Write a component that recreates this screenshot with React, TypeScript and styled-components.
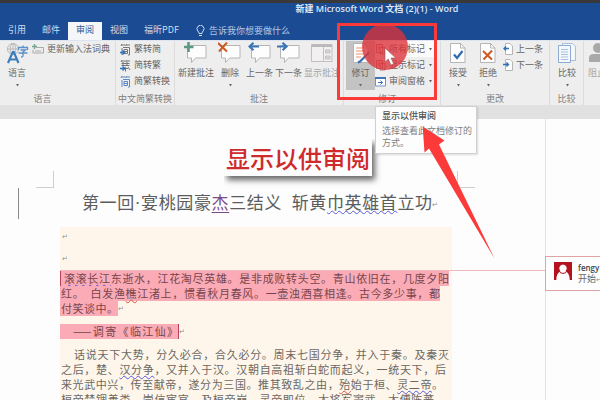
import React from "react";
import styled, { createGlobalStyle } from "styled-components";

const GlobalStyle = createGlobalStyle`
  * { box-sizing: border-box; }
  body { margin: 0; overflow: hidden; }
  button, input, select { font: inherit; color: inherit; border: 0; background: none; padding: 0; margin: 0; }
  svg { display: block; flex: none; }
`;

const Window = styled.div`
  position: relative;
  display: flex;
  flex-direction: column;
  height: 100vh;
  overflow: hidden;
  background: #fdfdfd;
  color: #666;
  font: 9px/12px "Noto Sans CJK SC", sans-serif;
`;

const TitleBar = styled.header`
  flex: none;
  border-top: 3px solid #393939;
  background: #1a4b93;
  color: #dfe8f5;
  padding-left: 154px;
  text-align: center;
  font: 600 9px/12px "Open Sans", "Noto Sans CJK SC", sans-serif;
  height: 22px;
`;

const Tabs = styled.nav`
  flex: none;
  display: flex;
  height: 18px;
  background: #1a4b93;
  color: #d3dff0;
`;

const Tab = styled.button<{ $active?: boolean }>`
  padding: 0 8px 2px;
  background: ${(p) => (p.$active ? "#f4f6f8" : "transparent")};
  color: ${(p) => (p.$active ? "#2b579a" : "inherit")};
`;

const TellMe = styled.label`
  display: flex;
  align-items: center;
  gap: 4px;
  padding-left: 9px;
  color: #b4c8e6;
  input { width: 100px; outline: none; }
  input::placeholder { color: #b4c8e6; opacity: 1; }
`;

const Ribbon = styled.div`
  flex: none;
  display: flex;
  height: 65px;
  background: #eeeeee;
  border-top: 1px solid #dbe4f0;
`;

const Group = styled.section<{ $width: number }>`
  flex: none;
  width: ${(p) => p.$width}px;
  display: flex;
  flex-direction: column;
  border-right: 1px solid #dcdcdc;
`;

const GroupBody = styled.div<{ $pad: number }>`
  flex: 1;
  display: flex;
  align-items: flex-start;
  padding-left: ${(p) => p.$pad}px;
`;

const GroupLabel = styled.footer<{ $shift?: number }>`
  text-align: center;
  line-height: 12px;
  padding-right: ${(p) => p.$shift || 0}px;
  color: #808080;
`;

const BigButton = styled.button<{ $width: number; $pressed?: boolean; $dim?: boolean }>`
  flex: none;
  width: ${(p) => p.$width}px;
  height: 49px;
  display: flex;
  flex-direction: column;
  align-items: center;
  white-space: nowrap;
  padding-top: 1px;
  background: ${(p) => (p.$pressed ? "#c3c3c3" : "transparent")};
  color: ${(p) => (p.$dim ? "#a5a5a5" : "inherit")};
  span { margin-top: 3px; }
`;

const Stack = styled.div`
  display: flex;
  flex-direction: column;
  align-items: flex-start;
`;

const SmallButton = styled.button`
  display: flex;
  align-items: center;
  gap: 3px;
  height: 16px;
  white-space: nowrap;
`;

const MarkupField = styled.label`
  display: flex;
  align-items: center;
  gap: 3px;
  height: 16px;
`;

const SelectBox = styled.span`
  display: flex;
  align-items: center;
  height: 16px;
  background: #fbfbfb;
  padding: 0 2px 0 0;
  select { appearance: none; width: 39px; outline: none; line-height: 12px; }
`;

const Workspace = styled.main`
  flex: 1;
  min-height: 0;
  display: flex;
  border-top: 14px solid #e1e1e1;
`;

const Page = styled.article`
  flex: 1;
  min-width: 0;
  padding-top: 52px;
`;

const Margins = styled.div`
  display: flex;
  justify-content: space-between;
  width: 439px;
  margin-left: 36px;
`;

const Corner = styled.i<{ $side: "left" | "right" }>`
  width: 18px;
  height: 17px;
  border-bottom: 1px solid #cfcfcf;
  border-${(p) => (p.$side === "left" ? "right" : "left")}: 1px solid #cfcfcf;
`;

const Heading = styled.div`
  display: flex;
  align-items: center;
  height: 31px;
  margin-left: 18px;
  border-left: 1px solid #8a8a8a;
  padding-left: 63px;
  h1 {
    margin: 0;
    width: 350px;
    font: 17px/24px "Liberation Serif", "Noto Sans CJK SC", serif;
    color: #5c5c5c;
    white-space: nowrap;
    text-align: justify;
    text-align-last: justify;
  }
  u { color: #7a4a8c; text-decoration-thickness: 1px; text-underline-offset: 3px; }
`;

const Manuscript = styled.div`
  width: 392px;
  margin: 8px 0 0 60px;
  padding-bottom: 40px;
  background: #fef6ea;
  font-size: 11px;
  line-height: 15px;
  color: #6c6863;
`;

const Blank = styled.p`
  margin: 0;
  padding-left: 2px;
  height: 22px;
  line-height: 14px;
`;

const Para = styled.p`
  margin: 0 0 8px;
`;

const Row = styled.span`
  display: flex;
  align-items: flex-start;
  height: 15px;
`;

const Line = styled.span<{ $width: number; $indent?: number; $marked?: boolean }>`
  flex: none;
  width: ${(p) => p.$width}px;
  height: 15px;
  padding-left: ${(p) => p.$indent || 1}px;
  background: ${(p) => (p.$marked ? "#fbabb6" : "transparent")};
  color: ${(p) => (p.$marked ? "#76454d" : "inherit")};
  white-space: nowrap;
  text-align: justify;
  text-align-last: justify;
`;

const Bracket = styled(Line)<{ $edge: "left" | "right" }>`
  border-${(p) => p.$edge}: 1px solid #b8425a;
`;

const Wavy = styled.span<{ $color: string }>`
  text-decoration: underline wavy ${(p) => p.$color} 1px;
  text-underline-offset: 1px;
  text-decoration-skip-ink: none;
`;

const Mark = styled.span`
  font-size: 7px;
  color: #8f8f8f;
`;

const Comments = styled.aside`
  flex: none;
  width: 55px;
  border-left: 1px solid #e6e0e0;
  padding-top: 137px;
`;

const Comment = styled.div`
  display: flex;
  gap: 6px;
  height: 35px;
  padding: 5px 0 0 8px;
  border: solid #dfa3a6;
  border-width: 1px 0 1px 1px;
  margin-left: -1px;
  white-space: nowrap;
`;

const CommentText = styled.div`
  display: flex;
  flex-direction: column;
  b { font: 600 8px/11px "Open Sans", sans-serif; color: #444; }
  span { line-height: 12px; }
`;

const Connector = styled.i`
  position: absolute;
  top: 270px;
  left: 60px;
  right: 55px;
  height: 1px;
  background: #eeb9bb;
`;

const Tooltip = styled.div`
  position: absolute;
  left: 375px;
  top: 106px;
  width: 102px;
  padding: 3px 4px 4px 6px;
  background: #fdfdfd;
  border: 1px solid #d0d0d0;
  box-shadow: 1px 1px 2px #0002;
  color: #808080;
  line-height: 12px;
  strong { display: block; margin-bottom: 3px; font-weight: 500; color: #505050; }
`;

const Callout = styled.div`
  position: absolute;
  left: 224px;
  top: 139px;
  padding: 0 2px;
  background: #fdfdfd;
  box-shadow: 3px 4px 6px #0009;
  clip-path: inset(0 -14px -14px 0);
  color: #cf2a2c;
  font: 500 24px/37px "Noto Sans CJK SC", sans-serif;
  white-space: nowrap;
`;

const Frame = styled.div`
  position: absolute;
  left: 337px;
  top: 23px;
  width: 100px;
  height: 77px;
  border: 3px solid #fc3a3a;
`;

const Halo = styled.div`
  position: absolute;
  left: 362px;
  top: 24px;
  width: 46px;
  height: 46px;
  border-radius: 50%;
  background: #dc3238c8;
`;

const Pointer = styled.svg`
  position: absolute;
  left: 384px;
  top: 47px;
`;

const Arrow = styled.svg`
  position: absolute;
  left: 420px;
  top: 124px;
`;

const Caret = () => (
  <svg width="5" height="12" viewBox="0 0 5 12"><path d="M1 5h3L2.500 7.500z" fill="#666" /></svg>
);

const Bubble = ({ children }: { children: React.ReactNode }) => (
  <svg width="24" height="22" viewBox="0 0 24 22">
    <path d="M3.500 3.500h18.500v12.500h-10.500l-4 4.500v-4.500h-4z" fill="#fdfdfd" stroke="#b5b5b5" />
    {children}
  </svg>
);

const Sheet = ({ children }: { children: React.ReactNode }) => (
  <svg width="18" height="22" viewBox="0 0 18 22">
    <path d="M1.500 1.500h10l4.500 4.500v14.500h-14.500z" fill="#fdfdfd" stroke="#b5b5b5" />
    <path d="M11.500 1.500v4.500h4.500" fill="none" stroke="#b5b5b5" />
    {children}
  </svg>
);

const LanguageIcon = () => (
  <svg width="24" height="22" viewBox="0 0 24 22">
    <g fill="none" stroke="#b9b9b9"><circle cx="8" cy="7" r="5.500" /><path d="M2.500 7h11M8 1.500v11" /><ellipse cx="8" cy="7" rx="2.800" ry="5.500" /></g>
    <path d="M3 21L7.800 10h1L13.500 21M4.700 17.500h7.200" fill="none" stroke="#3c7dbd" strokeWidth="2.200" />
    <path d="M13.500 8V5.500h9V8M18 3.500v2M15.500 8h5l-2.500 2v4q0 1-2 1M13.500 11h9" fill="none" stroke="#5b8fc9" strokeWidth="1.300" />
  </svg>
);

const ImeIcon = () => (
  <svg width="12" height="10" viewBox="0 0 12 10">
    <path d="M4 3.500h7.500v5.500h-10.500V5.500M3 7h6" fill="none" stroke="#ababab" />
    <path d="M2.500 0v5M0 2.500h5" stroke="#76a58e" strokeWidth="1.400" />
  </svg>
);

const ConvertIcon = ({ kind }: { kind: "jian" | "fan" | "both" }) => (
  <svg width="11" height="13" viewBox="0 0 11 13">
    <g fill="none" stroke={kind === "both" ? "#5b8ac2" : "#777"}>
      <path d="M2 1L1 3M1.500 2h3.500M6.500 1L5.500 3M6 2h4" />
      {kind === "fan"
        ? <path d="M1.500 4.500h8M1.500 6.500h8M3 3v4M7 3v4M6 8l-2 1.500h4M5.500 9.500v3M8 8l2 3" />
        : <path d="M2 5v7M3 4.500h6.500v7.500h-1.500M4 6.500h3.500v4h-3.500zM4 8.500h3.500" />}
    </g>
    {kind !== "both" && <path d="M0 9.500h4.500M2.500 7.500l2.200 2-2.200 2" fill="none" stroke="#2f72b5" strokeWidth="1.400" />}
  </svg>
);

const ShowCommentsIcon = () => (
  <svg width="24" height="22" viewBox="0 0 24 22">
    <path d="M1.500 2.500h20.500v17h-20.500z" fill="#f3f0f2" stroke="#c4bfc2" />
    <path d="M1.500 2.500h20.500v2.500h-20.500z" fill="#bcb7ba" />
    <path d="M13.500 5v14.500" stroke="#c4bfc2" />
    <path d="M15.500 8h4.500v3h-4.500zM15.500 14h4.500v3h-4.500z" fill="#ddd5da" stroke="#c4bfc2" />
  </svg>
);

const TrackIcon = () => (
  <Sheet>
    <path d="M4 6h6M4 9h9M4 12h8M4 15h5" stroke="#e9936f" />
    <path d="M17 10.500L8 19.500l-2 1" stroke="#3c6fae" strokeWidth="2.200" fill="none" />
  </Sheet>
);

const MarkupIcon = () => (
  <svg width="11" height="12" viewBox="0 0 11 12">
    <path d="M1.500 1.500h6v8h-6zM5 4.500h5v6.500h-5z" fill="#f7e6e6" stroke="#a5787c" />
    <path d="M3 4h3M3 6h2" stroke="#c56a6a" />
  </svg>
);

const PaneIcon = () => (
  <svg width="11" height="11" viewBox="0 0 11 11">
    <path d="M.5 1.500h10v8.500h-10z" fill="#fff" stroke="#6f93bd" />
    <path d="M0 1h11v2H0z" fill="#3f76b5" />
    <path d="M3 6.500h4.500M5.500 4.500l2 2-2 2" fill="none" stroke="#2f72b5" />
  </svg>
);

const StepIcon = ({ back }: { back?: boolean }) => (
  <svg width="10" height="12" viewBox="0 0 10 12">
    <path d="M2.500 .5h4.500l2.500 2.500v8.500h-7z" fill="#fff" stroke="#b5b5b5" />
    <path d={back ? "M6 5.500H1M3 3.500l-2 2 2 2" : "M0 5.500h5.500M3.500 3.500l2 2-2 2"} fill="none" stroke="#2f72b5" strokeWidth="1.400" />
  </svg>
);

const CompareIcon = () => (
  <svg width="20" height="22" viewBox="0 0 20 22">
    <path d="M5.500 1.500h10l3 3v14h-13z" fill="#f4f7fb" stroke="#a9bdd8" />
    <path d="M1.500 3.500h12v17h-12z" fill="#f4f8fd" stroke="#8eabd1" />
    <path d="M4 7.500h7M4 10h7M4 12.500h7M4 15h7M4 17.500h7" stroke="#a8c1e2" />
  </svg>
);

const BlockIcon = () => (
  <svg width="22" height="22" viewBox="0 0 22 22">
    <circle cx="12" cy="6" r="5" fill="#a9a9a9" />
    <path d="M3 20v-4q0-4 5-4h8q5 0 5 4v4z" fill="#a9a9a9" />
  </svg>
);

const Avatar = () => (
  <svg width="18" height="18" viewBox="0 0 18 18">
    <path d="M0 0h18v18H0z" fill="#b5121f" />
    <path d="M9 2.500a3.800 4 0 0 1 2.500 7q4 1 4.200 8.500H2.300q.2-7.500 4.200-8.500a3.800 4 0 0 1 2.500-7z" fill="#fdfdfd" />
    <path d="M6 10.500q3 2 6 0" fill="none" stroke="#b5121f" />
  </svg>
);

const blue = "#5a5ad8";
const red = "#dd4a3c";

export default function App() {
  return (
    <Window>
      <GlobalStyle />
      <TitleBar>新建 Microsoft Word 文档 (2)(1) - Word</TitleBar>
      <Tabs>
        <Tab>引用</Tab>
        <Tab>邮件</Tab>
        <Tab $active>审阅</Tab>
        <Tab>视图</Tab>
        <Tab>福昕PDF</Tab>
        <TellMe>
          <svg width="9" height="12" viewBox="0 0 9 12" aria-hidden="true">
            <path d="M3 8.500Q3 7 1.800 6a3.500 3.500 0 1 1 5.400 0Q6 7 6 8.500zM3 10.500h3" fill="none" stroke="#cfdcf0" />
          </svg>
          <input aria-label="告诉我你想要做什么" placeholder="告诉我你想要做什么" />
        </TellMe>
      </Tabs>

      <Ribbon>
        <Group $width={116}>
          <GroupBody $pad={2}>
            <BigButton $width={30}><LanguageIcon /><span>语言</span><Caret /></BigButton>
            <Stack>
              <SmallButton><ImeIcon />更新输入法词典</SmallButton>
            </Stack>
          </GroupBody>
          <GroupLabel $shift={30}>语言</GroupLabel>
        </Group>
        <Group $width={59}>
          <GroupBody $pad={4}>
            <Stack>
              <SmallButton><ConvertIcon kind="jian" />繁转简</SmallButton>
              <SmallButton><ConvertIcon kind="fan" />简转繁</SmallButton>
              <SmallButton><ConvertIcon kind="both" />简繁转换</SmallButton>
            </Stack>
          </GroupBody>
          <GroupLabel>中文简繁转换</GroupLabel>
        </Group>
        <Group $width={169}>
          <GroupBody $pad={2}>
            <BigButton $width={38}>
              <Bubble><path d="M4.500 0v10M0 5h9.500" stroke="#5b9a80" strokeWidth="2.600" /></Bubble>
              <span>新建批注</span>
            </BigButton>
            <BigButton $width={30}>
              <Bubble><path d="M0 1l9 8.500M9 .5L1 9.500" stroke="#cd5a24" strokeWidth="2" /></Bubble>
              <span>删除</span><Caret />
            </BigButton>
            <BigButton $width={29}>
              <Bubble><path d="M11 4.500H1.500M5.500 .8l-4 3.700 4 3.700" fill="none" stroke="#3a76b8" strokeWidth="2.200" /></Bubble>
              <span>上一条</span>
            </BigButton>
            <BigButton $width={29}>
              <Bubble><path d="M0 4.500h9.500M5.500 .8l4 3.700-4 3.700" fill="none" stroke="#3a76b8" strokeWidth="2.200" /></Bubble>
              <span>下一条</span>
            </BigButton>
            <BigButton $width={38} $dim><ShowCommentsIcon /><span>显示批注</span></BigButton>
          </GroupBody>
          <GroupLabel>批注</GroupLabel>
        </Group>
        <Group $width={97}>
          <GroupBody $pad={2}>
            <BigButton $width={29} $pressed><TrackIcon /><span>修订</span><Caret /></BigButton>
            <Stack>
              <MarkupField>
                <MarkupIcon />
                <SelectBox>
                  <select aria-label="标记显示方式" defaultValue="all"><option value="all">所有标记</option></select>
                  <Caret />
                </SelectBox>
              </MarkupField>
              <SmallButton><MarkupIcon />显示标记<Caret /></SmallButton>
              <SmallButton><PaneIcon />审阅窗格<Caret /></SmallButton>
            </Stack>
          </GroupBody>
          <GroupLabel $shift={10}>修订</GroupLabel>
        </Group>
        <Group $width={109}>
          <GroupBody $pad={2}>
            <BigButton $width={30}>
              <Sheet><path d="M5 12.500l3 3.500 5.500-7" fill="none" stroke="#2f6cb0" strokeWidth="2.200" /></Sheet>
              <span>接受</span><Caret />
            </BigButton>
            <BigButton $width={30}>
              <Sheet><path d="M4 9l9 8.500M13 8.500L4.500 17.500" stroke="#cd5a24" strokeWidth="2" /></Sheet>
              <span>拒绝</span><Caret />
            </BigButton>
            <Stack>
              <SmallButton><StepIcon back />上一条</SmallButton>
              <SmallButton><StepIcon />下一条</SmallButton>
            </Stack>
          </GroupBody>
          <GroupLabel>更改</GroupLabel>
        </Group>
        <Group $width={34}>
          <GroupBody $pad={2}>
            <BigButton $width={30}><CompareIcon /><span>比较</span><Caret /></BigButton>
          </GroupBody>
          <GroupLabel>比较</GroupLabel>
        </Group>
        <Group $width={60}>
          <GroupBody $pad={0}>
            <BigButton $width={26} $dim><BlockIcon /><span>阻止</span></BigButton>
          </GroupBody>
        </Group>
      </Ribbon>

      <Workspace>
        <Page>
          <Margins><Corner $side="left" /><Corner $side="right" /></Margins>
          <Heading>
            <h1>第一回·宴桃园豪<u>杰</u>三结义&nbsp; 斩黄<Wavy $color={blue}>巾英雄首</Wavy>立功</h1>
            <Mark>↵</Mark>
          </Heading>
          <Manuscript>
            <Blank><Mark>↵</Mark></Blank>
            <Blank><Mark>↵</Mark></Blank>
            <Para>
              <Row>
                <Bracket $edge="left" $marked $width={389} $indent={3}>
                  <Wavy $color={blue}>滚滚长江</Wavy>东逝水，江花淘尽英雄。是非成败转头空。青山依旧在，几度夕阳
                </Bracket>
              </Row>
              <Row>
                <Line $marked $width={380}>
                  红。&nbsp; 白发渔<Wavy $color={red}>樵</Wavy>江渚上，惯看秋月春风。一壶浊酒喜相逢。古今多少事，都
                </Line>
              </Row>
              <Row><Line $marked $width={58}>付笑谈中。</Line><Mark>↵</Mark></Row>
            </Para>
            <Para>
              <Row>
                <Bracket $edge="right" $marked $width={119} $indent={13}>——调寄《临江仙》</Bracket>
                <Mark>↵</Mark>
              </Row>
            </Para>
            <Para>
              <Row><Line $width={389} $indent={14}>话说天下大势，分久必合，合久必分。周末七国分争，并入于秦。及秦灭</Line></Row>
              <Row><Line $width={386}>之后，楚、<Wavy $color={blue}>汉分争</Wavy>，又并入于汉。汉朝自高祖斩白蛇而起义，一统天下，后</Line></Row>
              <Row><Line $width={383}>来光武中兴，传至献帝，遂分为三国。推其致乱之由，<Wavy $color={red}>殆</Wavy>始于桓、<Wavy $color={blue}>灵二帝</Wavy>。</Line></Row>
              <Row><Line $width={374}>桓帝禁锢善类，崇信宦官。及桓帝崩，灵帝即位，大将军窦武、太傅陈蕃</Line></Row>
            </Para>
          </Manuscript>
        </Page>
        <Comments>
          <Comment>
            <Avatar />
            <CommentText><b>fengy</b><span>开始<Mark>↵</Mark></span></CommentText>
          </Comment>
        </Comments>
      </Workspace>

      <Connector />
      <Callout>显示以供审阅</Callout>
      <Tooltip role="tooltip">
        <strong>显示以供审阅</strong>
        选择查看此文档修订的方式。
      </Tooltip>
      <Halo />
      <Pointer width="13" height="20" viewBox="0 0 13 20">
        <path d="M1 1v14l3.300-3 2.600 6 2.800-1.200-2.600-5.800h4.700z" fill="#fff" stroke="#8c5a5e" strokeWidth=".6" />
      </Pointer>
      <Frame />
      <Arrow width="76" height="136" viewBox="0 0 76 136">
        <path d="M2.700 2.500L24.500 16.500l-5.500 4L74.500 134.500 9 24.500 4.500 28.500z" fill="#fc3a3a" />
      </Arrow>
    </Window>
  );
}
